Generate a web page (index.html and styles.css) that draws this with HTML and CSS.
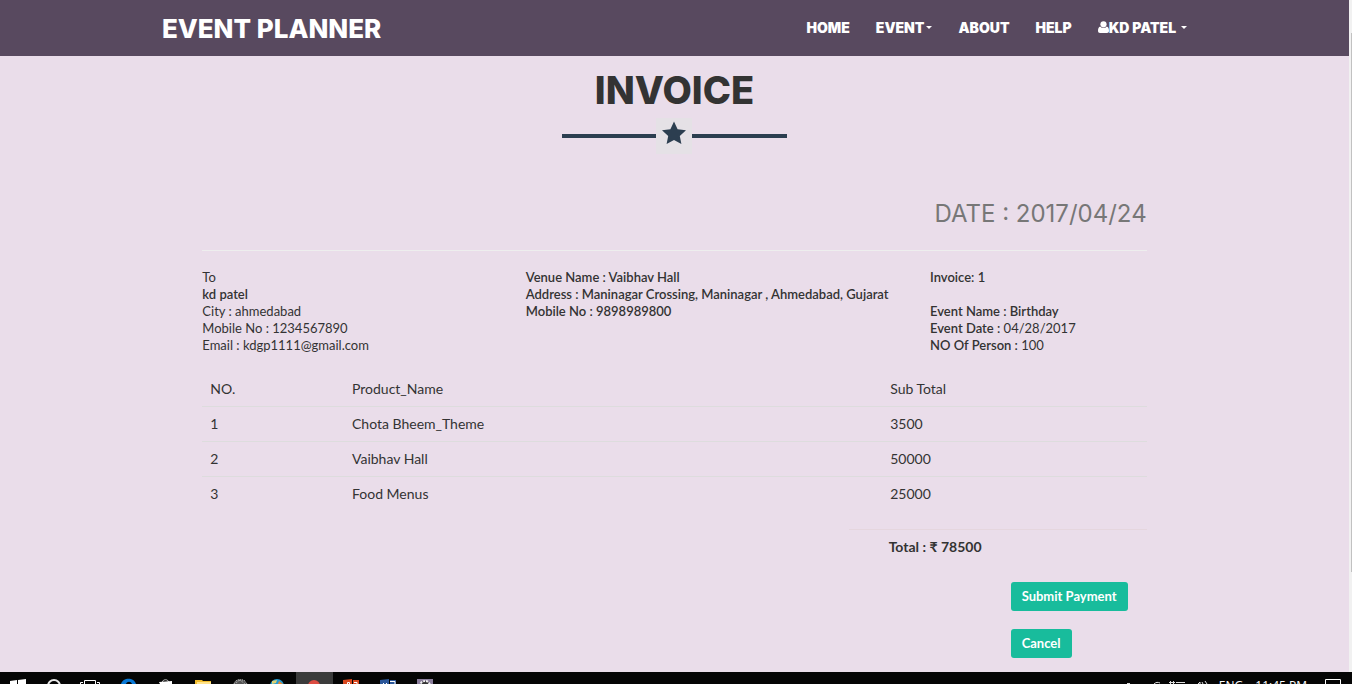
FILE: index.html
```html
<!DOCTYPE html>
<html lang="en">
<head>
<meta charset="utf-8">
<meta name="viewport" content="width=device-width, initial-scale=1">
<title>Event Planner - Invoice</title>
<link rel="stylesheet" href="styles.css">
</head>
<body>
<div class="browser">
  <div class="page">
    <header class="navbar">
      <a class="brand" href="#">EVENT PLANNER</a>
      <nav class="menu">
        <a href="#">HOME</a>
        <a class="event" href="#">EVENT<span class="caret"></span></a>
        <a href="#">ABOUT</a>
        <a href="#">HELP</a>
        <a class="user" href="#"><svg class="person" viewBox="0 0 11 12" aria-hidden="true"><circle cx="5.500" cy="3.300" r="3.100"/><path d="M2.300 5.400C.7 5.900 0 7.500 0 9.800 0 11.200.8 12 2 12h7c1.200 0 2-.8 2-2.200 0-2.300-.7-3.900-2.300-4.400a3.900 3.900 0 0 1-6.400 0z"/></svg>KD PATEL<span class="caret"></span></a>
      </nav>
    </header>
    <main class="invoice">
      <h1>INVOICE</h1>
      <div class="divider"><svg viewBox="0 0 36 36" aria-hidden="true"><path d="M18 3.500l3.600 7.800 8.400 1-6.200 5.700 1.600 8.100-7.400-4-7.400 4 1.600-8.100L6 12.300l8.400-1z"/></svg></div>
      <h2>DATE : 2017/04/24</h2>
      <section class="details">
        <address>To<br><b>kd patel</b><br>City : ahmedabad<br>Mobile No : 1234567890<br>Email : kdgp1111@gmail.com</address>
        <div><b>Venue Name : Vaibhav Hall<br>Address : Maninagar Crossing, Maninagar , Ahmedabad, Gujarat<br>Mobile No : 9898989800</b></div>
        <div><b>Invoice: 1</b><br><br><b>Event Name : Birthday</b><br><b>Event Date :</b> 04/28/2017<br><b>NO Of Person :</b> 100</div>
      </section>
      <table class="products">
        <thead><tr><th class="number">NO.</th><th class="product">Product_Name</th><th>Sub Total</th></tr></thead>
        <tbody>
          <tr><td>1</td><td>Chota Bheem_Theme</td><td>3500</td></tr>
          <tr><td>2</td><td>Vaibhav Hall</td><td>50000</td></tr>
          <tr><td>3</td><td>Food Menus</td><td>25000</td></tr>
        </tbody>
      </table>
      <p class="total">Total : ₹ 78500</p>
      <div class="actions">
        <button type="submit">Submit Payment</button>
        <button type="button">Cancel</button>
      </div>
    </main>
  </div>
  <div class="scrollbar"><div class="thumb"></div></div>
</div>
<footer class="taskbar">
  <div class="apps">
    <span><svg viewBox="0 0 37 12"><path fill="#fff" d="M10 9l7-1v4h-7zM18 8l8-1v5h-8z"/></svg></span>
    <span><svg viewBox="0 0 37 12"><circle cx="17" cy="14" r="6" fill="none" stroke="#e8e8e8" stroke-width="2"/></svg></span>
    <span><svg viewBox="0 0 37 12"><path fill="none" stroke="#fff" d="M10.500 12V8.500h11V12M9 10.500H6.500V12M23 10.500h2.500V12"/></svg></span>
    <span><svg viewBox="0 0 37 12"><path fill="#0878d6" d="M10 12c2-7 13-7 15 0h-4c-1-3-5-3-6 0z"/></svg></span>
    <span><svg viewBox="0 0 37 12"><path fill="none" stroke="#ccc" d="M14.500 10c0-3 6-3 6 0"/><path fill="#fff" d="M11 10l13-1v3H12z"/></svg></span>
    <span><svg viewBox="0 0 37 12"><path fill="#f2bd2f" d="M10 8h7l1 1h8v3H10z"/><path fill="#ffe289" d="M12 10h14v2H12z"/></svg></span>
    <span><svg viewBox="0 0 37 12"><circle cx="18" cy="14" r="7" fill="#555"/><path fill="none" stroke="#bbb" stroke-dasharray="1 1" d="M12 12l3-4 7 0 3 4M14 11l4-3 5 4"/></svg></span>
    <span><svg viewBox="0 0 37 12"><circle cx="18" cy="14" r="7" fill="#259bd0"/><path fill="#ddd171" d="M13 9l5-1-1 3-4 1z"/><path fill="#e78935" d="M20 9l4 3h-5z"/></svg></span>
    <span class="active"><svg viewBox="0 0 37 12"><circle cx="18" cy="14" r="6" fill="#dc4c42"/></svg></span>
    <span><svg viewBox="0 0 37 12"><path fill="#d9481f" d="M10 8l9-1v5h-9zM20 8h6v4h-6z"/><path fill="none" stroke="#fff" d="M14.500 12v-1.500h2V12M21 10.500h3V12"/></svg></span>
    <span><svg viewBox="0 0 37 12"><path fill="#2b579a" d="M10 8l9-1v5h-9zM20 8h6v4h-6z"/><path fill="none" stroke="#fff" d="M13.500 11v1M16.500 11v1M20 9.500h5V12"/></svg></span>
    <span><svg viewBox="0 0 37 12"><path fill="#8b7e9d" d="M10 7h16v5H10z"/><circle cx="18" cy="14" r="5" fill="#333" stroke="#eee" stroke-width="2" stroke-dasharray="2 1"/></svg></span>
  </div>
  <div class="tray">
    <svg class="status" viewBox="0 0 90 12" aria-hidden="true"><path fill="none" stroke="#ddd" d="M8 11.500h3M35 12c2-2 4-2 6-1M51.500 12V9M54.500 12V9M50 10.500h6M57 10.500h9M79 12l2-2v2M83 10l1 2M86 9l2 3"/></svg>
    <span>ENG</span><time>11:45 PM</time>
    <svg class="notice" viewBox="0 0 16 12" aria-hidden="true"><path fill="none" stroke="#fff" d="M.5 12V7.500h15V12"/></svg>
  </div>
</footer>
</body>
</html>
```
FILE: styles.css
```css
* { box-sizing: border-box; }
body {
  margin: 0;
  height: 100vh;
  display: flex;
  flex-direction: column;
  overflow: hidden;
  background: #eaddea;
  color: #333;
  font-family: Lato, sans-serif;
}
.browser { flex: 1; min-height: 0; display: flex; }
.page { flex: 1; min-width: 0; overflow: hidden; }
.scrollbar { width: 3px; padding: 33px 0 100px 2px; background: #f1f1f1; }
.thumb { height: 100%; background: #c1c1c1; }
.navbar {
  height: 56px;
  padding: 0 12%;
  display: flex;
  align-items: center;
  justify-content: space-between;
  background: #58495f;
  font-family: Inter, sans-serif;
}
.navbar a { color: #fff; text-decoration: none; white-space: nowrap; }
.brand { font-size: 26px; font-weight: 800; }
.menu { display: flex; gap: 26px; padding-bottom: 2px; font-size: 14px; font-weight: 900; }
.menu a { display: flex; align-items: center; }
.caret {
  margin-left: 2px;
  border: 3px solid transparent;
  border-top-color: #fff;
  border-bottom: 0;
}
.person { width: 11px; height: 12px; fill: #fff; }
.user .caret { margin-left: 5px; }
.invoice { width: 70%; margin: 0 auto; }
h1 {
  margin: 11px 0 0;
  text-align: center;
  font: 800 38px/46px Inter, sans-serif;
}
.divider {
  width: 225px;
  height: 36px;
  margin: 5px auto 0;
  display: flex;
  align-items: center;
}
.divider::before, .divider::after {
  content: "";
  flex: 1;
  height: 4px;
  background: #2c3e50;
}
.divider svg { width: 36px; height: 36px; background: #e5e1e6; fill: #2c3e50; }
h2 {
  margin: 43px 0 0;
  padding-bottom: 20px;
  border-bottom: 1px solid #eee;
  color: #777;
  text-align: right;
  font: 400 24px/33px Inter, sans-serif;
}
.details {
  display: grid;
  grid-template-columns: 324fr 405fr 217fr;
  margin-top: 18px;
  font-size: 13px;
  line-height: 17px;
}
.details b { font-weight: 600; }
address { font-style: normal; }
.products {
  width: 100%;
  margin-top: 18px;
  border-collapse: collapse;
  table-layout: fixed;
  font-size: 14px;
  line-height: 18px;
}
.products th { font-weight: 400; text-align: left; }
.products th, .products td { padding: 8px; }
.products td { border-top: 1px solid #dddcdd; }
.number { width: 15%; }
.product { width: 57%; }
.total {
  width: 298px;
  margin: 18px 0 0 auto;
  padding: 8px 0 8px 40px;
  border-top: 1px solid #e5d6de;
  font-size: 14px;
  font-weight: 700;
  line-height: 18px;
}
.actions {
  width: 136px;
  margin: 18px 0 0 auto;
  display: flex;
  flex-direction: column;
  align-items: flex-start;
  gap: 18px;
}
button {
  padding: 5px 11px;
  border: 0;
  border-radius: 3px;
  background: #18bc9c;
  color: #fff;
  font: 700 13px/19px Lato, sans-serif;
}
.taskbar {
  height: 12px;
  flex: none;
  display: flex;
  justify-content: space-between;
  overflow: hidden;
  background: #050505;
}
.apps { display: flex; }
.apps span { width: 37px; height: 12px; }
.apps svg { display: block; width: 37px; height: 12px; }
.active { background: #3b3b3b; }
.tray {
  display: flex;
  padding-right: 11px;
  color: #fff;
  font: 12px/28px "Open Sans", sans-serif;
}
.status { width: 90px; height: 12px; margin-right: 10px; }
.tray time { margin-left: 12px; }
.notice { width: 16px; height: 12px; margin-left: 18px; }
```
